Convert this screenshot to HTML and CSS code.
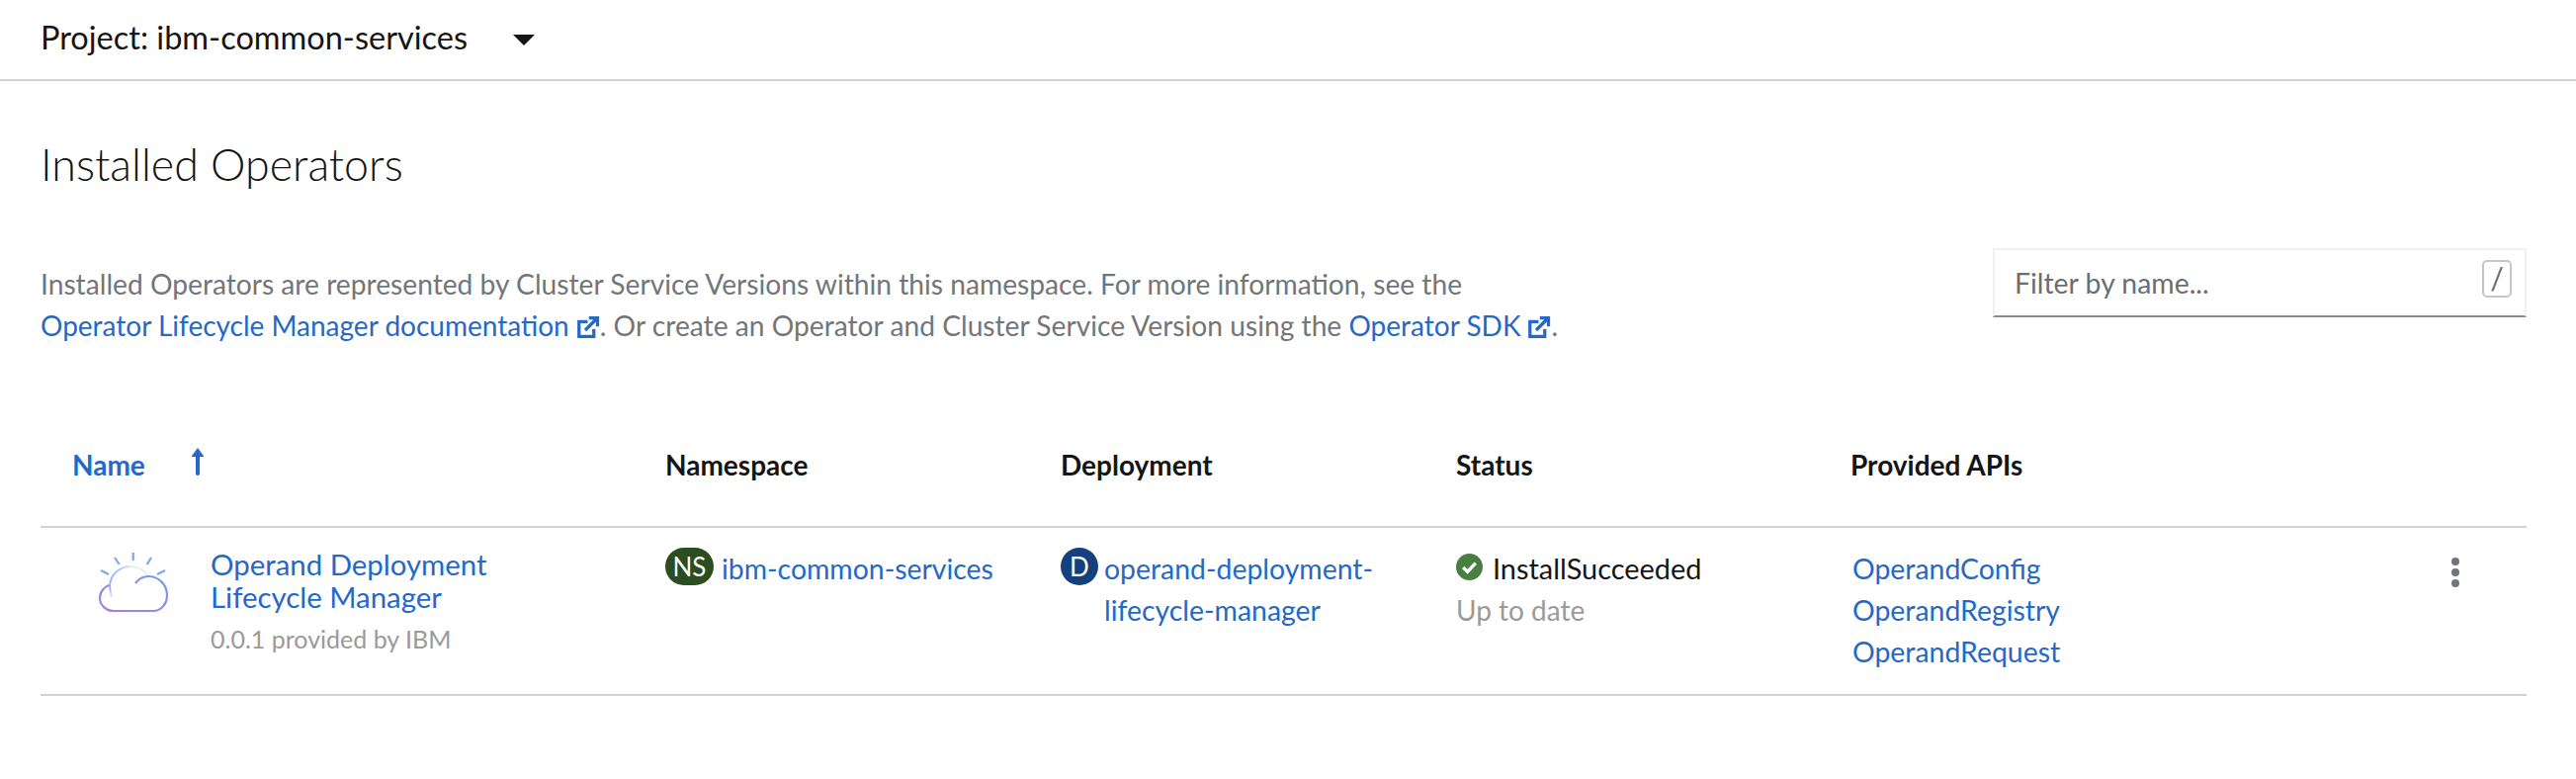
FILE: index.html

```html
<!DOCTYPE html>
<html lang="en">

<head>
    <meta charset="UTF-8">
    <meta name="viewport" content="width=device-width, initial-scale=1.0">
    <title>Installed Operators</title>
    <link rel="stylesheet" href="styles.css">
</head>

<body>
    <div class="project-bar">
        <span class="project-name">Project: ibm-common-services</span>
        <span class="caret"></span>
    </div>

    <div class="content">
        <h1 class="title">Installed Operators</h1>

        <div class="intro">
            <p class="help">
                Installed Operators are represented by Cluster Service Versions within this namespace. For more information, see the<br>
                <a class="doc-link" href="#">Operator Lifecycle Manager documentation<svg class="ext" viewBox="0 0 20 20"><path d="M15 11v6H3V5h7" fill="none" stroke="#2468c9" stroke-width="2.6"/><path d="M8 12l9-9M11 2h7v7" fill="none" stroke="#2468c9" stroke-width="2.6"/></svg></a>. Or create an Operator and Cluster Service Version using the
                <a class="doc-link" href="#">Operator SDK<svg class="ext" viewBox="0 0 20 20"><path d="M15 11v6H3V5h7" fill="none" stroke="#2468c9" stroke-width="2.6"/><path d="M8 12l9-9M11 2h7v7" fill="none" stroke="#2468c9" stroke-width="2.6"/></svg></a>.
            </p>
            <div class="filter">
                <span class="filter-text">Filter by name...</span>
                <span class="slash">/</span>
            </div>
        </div>

        <div class="table-head">
            <div class="sort-cell">
                <span class="sorted">Name</span>
                <svg class="sort-arrow" viewBox="0 0 16 28"><path d="M8 0l6.5 9H10v17a2 2 0 0 1-4 0V9H1.500z" fill="#2468c9"/></svg>
            </div>
            <div>Namespace</div>
            <div>Deployment</div>
            <div>Status</div>
            <div>Provided APIs</div>
        </div>

        <div class="table-row">
            <div class="name-cell">
                <svg class="logo" viewBox="0 0 70 62">
                    <defs>
                        <linearGradient id="cloudGrad" x1="0" y1="1" x2="1" y2="0">
                            <stop offset="0" stop-color="#a87fdc"/>
                            <stop offset="1" stop-color="#6f9df0"/>
                        </linearGradient>
                        <linearGradient id="topGrad" x1="0" y1="0" x2="1" y2="0.3">
                            <stop offset="0" stop-color="#7da4ee"/>
                            <stop offset="1" stop-color="#e6edfb"/>
                        </linearGradient>
                        <linearGradient id="fadeGrad" x1="0" y1="0" x2="0" y2="1">
                            <stop offset="0" stop-color="#8fa8ec"/>
                            <stop offset="1" stop-color="#e8e4f8"/>
                        </linearGradient>
                    </defs>
                    <path d="M34.700 1v8M16 6l4.700 7M53 6l-4.300 7M2 19l8 4M67 19l-8 4" stroke="#7da4ee" stroke-width="2.200" fill="none"/>
                    <path d="M32 15C21 15 12 23 11 34" stroke="url(#topGrad)" stroke-width="2" fill="none"/>
                    <path d="M32 15c8 0 14 4 18 10" stroke="#e6edfb" stroke-width="2" fill="none"/>
                    <path d="M11 34c0 4 1 8 2 12" stroke="url(#fadeGrad)" stroke-width="2" fill="none"/>
                    <path d="M37 32c3-4 8-7 13-7 10 0 19 8 19 19 0 9-6 16-14 16H15C7 60 1 54 1 47c0-6 4-11 9-13" stroke="url(#cloudGrad)" stroke-width="2.200" fill="none"/>
                </svg>
                <div>
                    <a class="op-name" href="#">Operand Deployment<br>Lifecycle Manager</a>
                    <div class="op-version">0.0.1 provided by IBM</div>
                </div>
            </div>
            <div class="res-cell">
                <span class="badge ns">NS</span>
                <a href="#">ibm-common-services</a>
            </div>
            <div class="res-cell">
                <span class="badge deploy">D</span>
                <a href="#">operand-deployment-<br>lifecycle-manager</a>
            </div>
            <div>
                <div class="status-line">
                    <svg class="check" viewBox="0 0 28 28"><circle cx="14" cy="14" r="14" fill="#467f40"/><path d="M7.500 14.500l4.500 4.500 8.500-9" fill="none" stroke="#fff" stroke-width="3.600"/></svg>
                    <span class="status-text">InstallSucceeded</span>
                </div>
                <div class="muted">Up to date</div>
            </div>
            <div class="api-list">
                <a href="#">OperandConfig</a>
                <a href="#">OperandRegistry</a>
                <a href="#">OperandRequest</a>
            </div>
            <div class="kebab"><i></i><i></i><i></i></div>
        </div>
    </div>
</body>
</html>
```

FILE: styles.css

```css
body {
    margin: 0;
    background-color: #fff;
    color: #151515;
    font-family: "Lato", "Liberation Sans", sans-serif;
    font-size: 28.4px;
}

a {
    color: #2468c9;
    text-decoration: none;
}

.project-bar {
    height: 74px;
    padding-left: 41px;
    padding-bottom: 6px;
    border-bottom: 2px solid #d2d2d2;
    display: flex;
    align-items: center;
}

.project-name {
    font-size: 32.5px;
}

.caret {
    margin-left: 46px;
    margin-top: 6px;
    border-top: 11px solid #151515;
    border-left: 11px solid transparent;
    border-right: 11px solid transparent;
}

.content {
    padding: 0 50px 0 41px;
}

.title {
    margin: 58px 0 0;
    font-size: 44.8px;
    font-weight: 300;
    line-height: 52px;
}

.intro {
    display: flex;
    justify-content: space-between;
    margin-top: 59px;
}

.help {
    margin: 0;
    padding-top: 15px;
    color: #737679;
    font-size: 28.2px;
    line-height: 42px;
}

.doc-link {
    font-size: 28px;
}

.ext {
    width: 25px;
    height: 25px;
    margin-left: 6px;
    vertical-align: -4px;
}

.filter {
    width: 540px;
    height: 70px;
    box-sizing: border-box;
    padding: 0 13px 0 20px;
    border: 2px solid #f0f0f0;
    border-bottom: 2px solid #8a8d90;
    display: flex;
    align-items: center;
    justify-content: space-between;
}

.filter-text {
    color: #6a6e73;
    font-size: 28.4px;
}

.slash {
    width: 30px;
    height: 38px;
    box-sizing: border-box;
    margin-top: -9px;
    border: 2px solid #c4c6c8;
    border-radius: 5px;
    color: #6a6e73;
    font-size: 30px;
    line-height: 33px;
    text-align: center;
}

.table-head,
.table-row {
    display: grid;
    grid-template-columns: 632px 400px 400px 399px 1fr;
}

.table-head {
    margin-top: 103px;
    height: 79px;
    font-size: 28px;
    font-weight: 700;
    border-bottom: 2px solid #d2d2d2;
}

.sort-cell {
    display: flex;
    align-items: flex-start;
    padding-left: 32px;
}

.sorted {
    color: #2468c9;
}

.sort-arrow {
    width: 16px;
    height: 28px;
    margin-left: 45px;
}

.table-row {
    position: relative;
    height: 170px;
    padding-top: 20px;
    box-sizing: border-box;
    border-bottom: 2px solid #d2d2d2;
    line-height: 42px;
}

.name-cell {
    display: flex;
    padding-left: 59px;
}

.logo {
    width: 70px;
    height: 62px;
    margin-top: 4px;
    margin-right: 43px;
    flex-shrink: 0;
}

.op-name {
    display: block;
    font-size: 29.4px;
    line-height: 33px;
}

.op-version {
    margin-top: 9px;
    color: #9a9a9a;
    font-size: 25px;
    line-height: 34px;
}

.res-cell {
    display: flex;
    align-items: flex-start;
}

.badge {
    flex-shrink: 0;
    height: 38px;
    margin-right: 8px;
    border-radius: 19px;
    color: #fff;
    font-size: 26px;
    font-weight: 400;
    line-height: 38px;
    text-align: center;
}

.badge.ns {
    width: 49px;
    background-color: #2b4d1f;
}

.badge.deploy {
    width: 38px;
    margin-right: 6px;
    background-color: #15407e;
}

.status-line {
    display: flex;
    align-items: center;
    gap: 10px;
}

.status-text {
    font-size: 28.9px;
}

.check {
    width: 27px;
    height: 27px;
    margin-top: -4px;
}

.muted {
    color: #9a9a9a;
    font-size: 28px;
}

.api-list {
    padding-left: 2px;
}

.api-list a {
    display: block;
}

.kebab {
    position: absolute;
    top: 30px;
    right: 68px;
    display: flex;
    flex-direction: column;
    gap: 3px;
}

.kebab i {
    width: 8px;
    height: 8px;
    border-radius: 50%;
    background-color: #72767b;
}
```
